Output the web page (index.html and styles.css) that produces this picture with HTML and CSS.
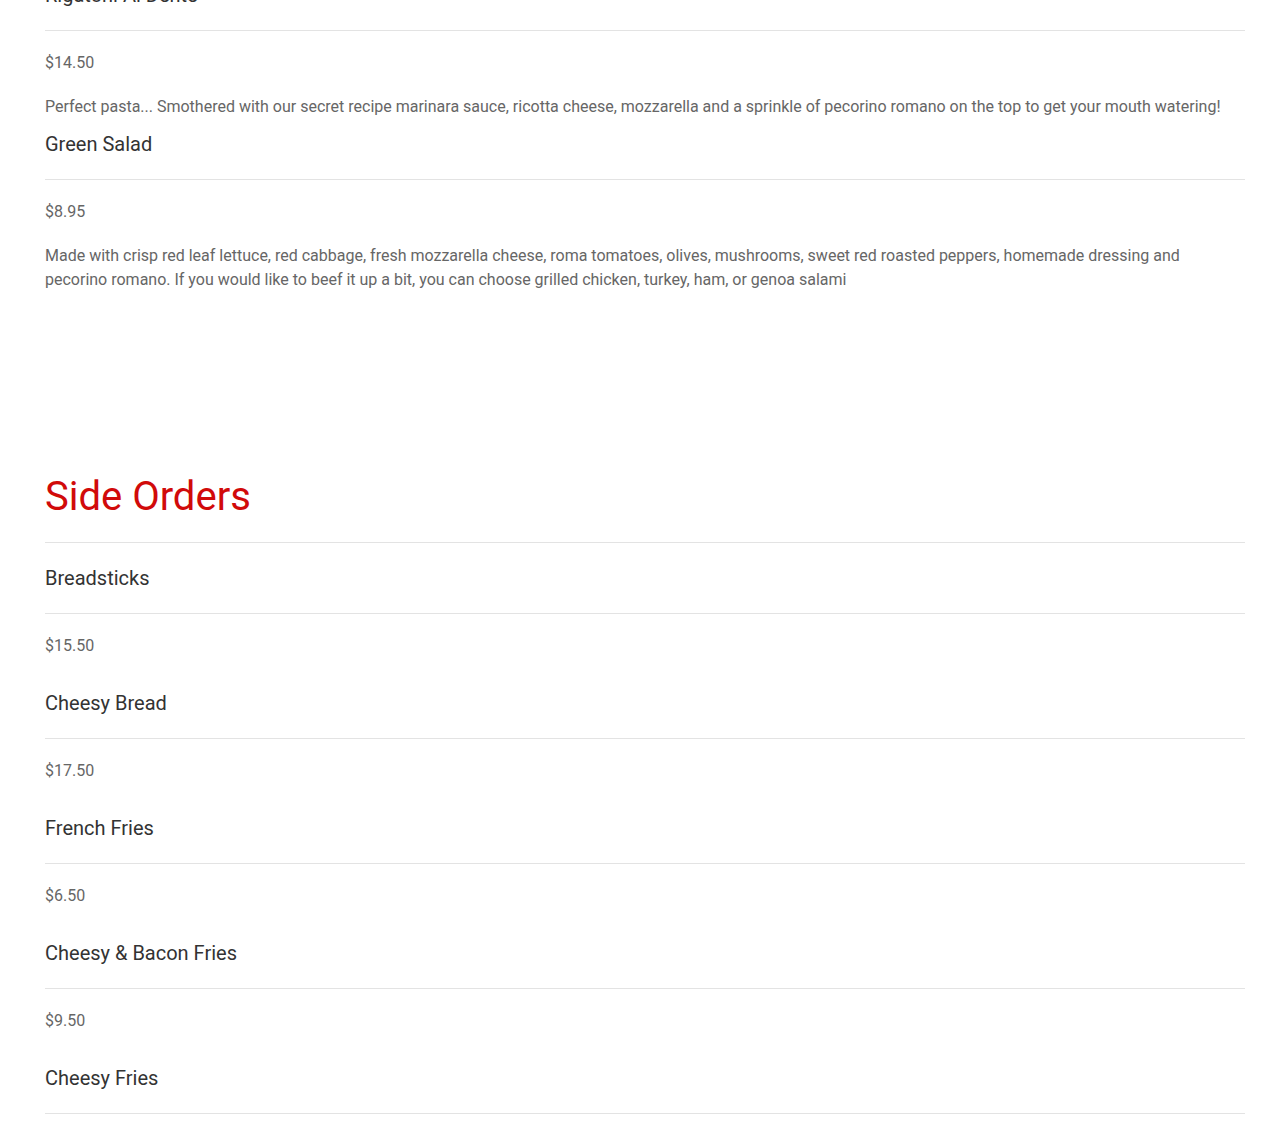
FILE: index.html
```html
<!DOCTYPE html>
<html lang="en">
<head>
<meta charset="utf-8">
<title>Menu</title>
<link rel="stylesheet" href="styles.css">
</head>
<body>
<main class="menu">
  <section class="section section-first">
    <div class="item">
      <h3 class="item-title">Rigatoni Al Dente</h3>
      <p class="item-price">$14.50</p>
      <p class="item-desc">Perfect pasta... Smothered with our secret recipe marinara sauce, ricotta cheese, mozzarella and a sprinkle of pecorino romano on the top to get your mouth watering!</p>
    </div>
    <div class="item">
      <h3 class="item-title">Green Salad</h3>
      <p class="item-price">$8.95</p>
      <p class="item-desc">Made with crisp red leaf lettuce, red cabbage, fresh mozzarella cheese, roma tomatoes, olives, mushrooms, sweet red roasted peppers, homemade dressing and pecorino romano. If you would like to beef it up a bit, you can choose grilled chicken, turkey, ham, or genoa salami</p>
    </div>
  </section>
  <section class="section">
    <h2 class="section-title">Side Orders</h2>
    <div class="item">
      <h3 class="item-title">Breadsticks</h3>
      <p class="item-price">$15.50</p>
    </div>
    <div class="item">
      <h3 class="item-title">Cheesy Bread</h3>
      <p class="item-price">$17.50</p>
    </div>
    <div class="item">
      <h3 class="item-title">French Fries</h3>
      <p class="item-price">$6.50</p>
    </div>
    <div class="item">
      <h3 class="item-title">Cheesy &amp; Bacon Fries</h3>
      <p class="item-price">$9.50</p>
    </div>
    <div class="item">
      <h3 class="item-title">Cheesy Fries</h3>
    </div>
  </section>
</main>
</body>
</html>
```

FILE: styles.css
```css
html, body {
  margin: 0;
  padding: 0;
  background: #ffffff;
}

body {
  font-family: Roboto, "Liberation Sans", Arial, sans-serif;
  overflow: hidden;
}

.menu {
  width: 1200px;
  margin: -20px 0 0 45px;
}

.section-first {
  margin-bottom: 171px;
}

.section-title {
  margin: 0 0 20px;
  padding-bottom: 21px;
  border-bottom: 1px solid #e3e3e3;
  font-size: 40px;
  line-height: 48px;
  font-weight: 400;
  color: #d10a0a;
}

.item {
  padding-bottom: 10px;
}

.item-title {
  margin: 0;
  padding-bottom: 20px;
  border-bottom: 1px solid #e3e3e3;
  font-size: 20px;
  line-height: 30px;
  font-weight: 400;
  color: #333333;
}

.item-price {
  margin: 20px 0 20px;
  font-size: 16px;
  line-height: 24px;
  color: #666666;
}

.item-desc {
  margin: 0;
  font-size: 16px;
  line-height: 24px;
  color: #666666;
}
```
